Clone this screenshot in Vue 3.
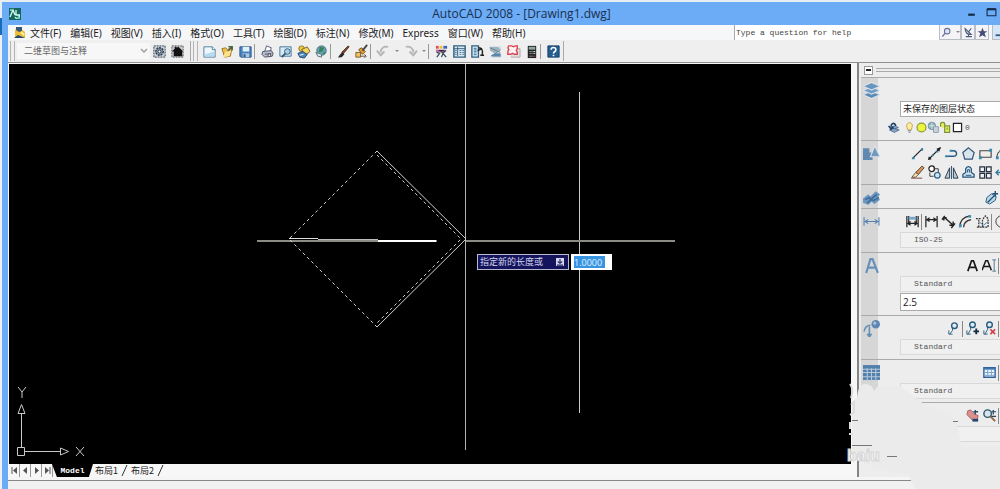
<script setup>
const menus = ['文件(F)', '编辑(E)', '视图(V)', '插入(I)', '格式(O)', '工具(T)', '绘图(D)', '标注(N)', '修改(M)', 'Express', '窗口(W)', '帮助(H)']

const icons = {
  gear: '<rect x="2" y="2" width="12" height="12" fill="#c9d3de" stroke="#333c48" stroke-dasharray="2 1"/><circle cx="8" cy="8" r="4" fill="#8295a8" stroke="#26323f" stroke-width="1.4" stroke-dasharray="2 1"/><circle cx="8" cy="8" r="1.6" fill="#fff" stroke="#26323f"/>',
  home: '<rect x="2" y="2" width="12" height="12" fill="#c5cbd2" stroke="#555" stroke-dasharray="2 1"/><path d="M2 8L5 5V3h2v1l2-1 5 5h-1v5H4V8z" fill="#111"/>',
  file: '<path d="M2 3h9l3 3v8H2z" fill="#eef7fd" stroke="#4f7e9e"/><path d="M3 11l10-3v5H3z" fill="#b4dcf0"/><path d="M11 3v3h3" fill="#fff" stroke="#4f7e9e"/>',
  open: '<path d="M2 5l4-1 2 2 5-3-2 10-6 1z" fill="#efc04c" stroke="#927026"/><path d="M7 9l6-6M9 3h4v4" fill="none" stroke="#4a6440" stroke-width="1.5"/><path d="M3 14l3-6 6-1-2 6z" fill="#ffe28b"/>',
  save: '<path d="M2 3h12v11H3l-1-1z" fill="#4b83c0" stroke="#285788"/><path d="M5 3h7v5H5z" fill="#e3f0fb"/><path d="M5 10h7v4H5z" fill="#a9c6e2"/><path d="M6 11h2v3H6z" fill="#27517d"/>',
  print: '<path d="M5 8l2-6 5 2-1 4" fill="#fff" stroke="#525e78"/><path d="M3 8l9-1 2 3-1 3-8 1-3-3z" fill="#b8bfd0" stroke="#454f6c"/><path d="M5 11l7-1" stroke="#555"/><circle cx="10" cy="12" r="1.5" fill="#e7e9f0" stroke="#444"/>',
  preview: '<path d="M2 3h12v10H2z" fill="#d5ebf7" stroke="#417495"/><circle cx="10" cy="8" r="3" fill="#a9d2e8" stroke="#355b78"/><path d="M8 10l-4 4" stroke="#355b78" stroke-width="2"/>',
  publish: '<circle cx="6" cy="5" r="3" fill="#f0c63c" stroke="#8d7223"/><path d="M6 6l6-3 3 5-5 4z" fill="#f3d65d" stroke="#716035"/><path d="M2 10l5-2 5 3-3 4-5-1z" fill="#4a86bc" stroke="#25486a"/><path d="M4 12l4-1" stroke="#fff"/>',
  globe: '<circle cx="8" cy="7" r="5" fill="#69a6bd" stroke="#446a75"/><path d="M6 3l5 1-2 4-4 1zM10 8l3 1-3 3z" fill="#39825b"/><path d="M2 9l6 2v3l-4-1z" fill="#d7e8ed" stroke="#55717a"/>',
  brush: '<path d="M13 2l1 1-6 7-2-1z" fill="#7b4b2d" stroke="#53301b"/><path d="M7 9l2 2-3 3-4 .5 3-4z" fill="#252525"/>',
  match: '<path d="M2 9h5v5H2z" fill="#f2c35d" stroke="#7e5c2c"/><path d="M5 6l3-2 4 4-3 3z" fill="#e6a02e" stroke="#6b4e26"/><path d="M14 1L9 7" stroke="#4e4440" stroke-width="2"/><path d="M7 13h5M11 11l2 2-2 2" stroke="#5c4b46" fill="none"/>',
  undo: '<path d="M13 3C8 2 5 5 5 9M1 7l4 5 4-4" fill="none" stroke="#b5b5b5" stroke-width="2"/>',
  redo: '<path d="M3 3c5-1 8 2 8 6M7 8l4 4 4-5" fill="none" stroke="#b5b5b5" stroke-width="2"/>',
  props: '<path d="M2 2h3v3H2z" fill="#e54b56"/><path d="M6 2h3v3H6z" fill="#ecc52e"/><path d="M10 2h4v3h-4z" fill="#3b62bd"/><path d="M2 6h10v3H2z" fill="#c16cab"/><path d="M3 9l3 1-3 4M7 7l6 7M8 14l2-5 3-2" fill="none" stroke="#334858" stroke-width="1.3"/><path d="M5 7h6" stroke="#222"/>',
  dcenter: '<path d="M2 2h12v12H2z" fill="#dcecf5" stroke="#315c7d" stroke-width="1.5"/><path d="M6 3v10M2 5h12" stroke="#315c7d"/><path d="M8 7h2M11 7h2M8 9h2M11 9h2M8 11h2M11 11h2M3 7h2M3 9h2M3 11h2" stroke="#47759a"/>',
  tools: '<path d="M2 2h7v12H2z" fill="#dcecf5" stroke="#315c7d" stroke-width="1.4"/><path d="M4 4h3v2H4zM4 7h3v2H4zM4 10h3v2H4z" fill="#5788ae"/><path d="M9 4c4 0 5 3 4 8M8 7l5-2M11 12h4" fill="none" stroke="#222" stroke-width="1.5"/>',
  sheet: '<path d="M2 3h12v3L8 9l6 1v4H4l3-4-5-3z" fill="#9db4bf"/><path d="M2 4l11 5M3 13l10-6" stroke="#617f90"/><path d="M5 11l8-1v3H4z" fill="#5688ad"/><path d="M10 3l4-1v4z" fill="#ddd"/>',
  markup: '<path d="M6 5h9v9H5" fill="#ddd" stroke="#b6a4a5"/><path d="M3 2h3l2 1 2-1h2v3l-1 2 1 2v2H9l-2-1-2 1H2V8l1-2-1-2z" fill="#fff2f2" stroke="#d94452" stroke-width="1.5"/>',
  calc: '<path d="M4 2h9v13H4z" fill="#242424"/><path d="M5 3h7v3H5z" fill="#91a79b"/><path d="M6 8h1M8 8h1M10 8h2M6 10h1M8 10h1M10 10h2M6 13h1M8 13h1" stroke="#ddd"/><path d="M10 13h2" stroke="#e33"/>',
  help: '<path d="M2 2h12v12H2z" fill="#255f91" stroke="#123e69"/><path d="M5.5 6C5.5 3 10.5 3 10.5 6S8 7.500 8 10M8 11.500v1.500" fill="none" stroke="#fff" stroke-width="1.7"/>',
  layers: '<path d="M0 12l8-3.500 8 3.500-8 3.500z" fill="#5b88b5" stroke="#e1e5ea"/><path d="M0 8l8-3.500L16 8l-8 3.500z" fill="#6f9cc6" stroke="#e1e5ea"/><path d="M0 4l8-3.500L16 4 8 7.500z" fill="#6795c0" stroke="#e1e5ea"/>',
  layerback: '<path d="M3 11l6-2 6 2-6 3zM4 8l5-2 5 2-5 2z" fill="#8eacc8" stroke="#446385"/><path d="M11 6C9 1 5 3 5 7M2 6l3 4 3-3" fill="none" stroke="#1e4267" stroke-width="2"/>',
  bulb: '<path d="M8 2a4 4 0 0 0-3 6l1 3h4l1-3a4 4 0 0 0-3-6z" fill="#ffed9a" stroke="#b9994a"/><path d="M6 12h4M7 14h2" stroke="#657185"/>',
  sun: '<circle cx="8" cy="8" r="5.500" fill="#eef33d" stroke="#8c9b3e" stroke-width="1.5"/>',
  freeze: '<circle cx="6" cy="6" r="4.500" fill="#94b6bb" stroke="#557d92"/><path d="M8 7h6v7H8z" fill="#cbd2db" stroke="#8393a6"/><path d="M2 6h8M6 2v8" stroke="#d9ede9"/>',
  lock: '<path d="M2 7V4c0-3 5-3 5 0v5M7 6h6v8H7z" fill="#e8ed65" stroke="#7b9436" stroke-width="1.5"/><path d="M10 8v3" stroke="#5f792c"/>',
  square: '<path d="M3 3h10v10H3z" fill="#fff" stroke="#222" stroke-width="1.5"/>',
  shapes: '<path d="M0 3h6v4h3v7H0z" fill="#6289b0"/><path d="M11 1l5 10H7z" fill="#7199c0" stroke="#dce2e8"/>',
  solid: '<path d="M0 9l5-4 2 2 5-5 4 3-2 3 2 2-5 4-3-2-3 3-5-2z" fill="#6e97bf"/><path d="M2 10l4-2 1 2 6-5M4 13l4-3 2 1 5-3" fill="none" stroke="#3e6d9b" stroke-width="1.5"/>',
  line: '<path d="M3 13L13 3" stroke="#222" stroke-width="1.3"/><path d="M2 12h3v2H2zM12 2h2v3h-2z" fill="#368bad"/>',
  ray: '<path d="M2 14L14 2" stroke="#222" stroke-width="1.5"/><path d="M10 3l5-2-2 5zM2 11l-1 4 4-1z" fill="#222"/><path d="M5 9h2v2H5zM10 5h2v2h-2z" fill="#368bad"/>',
  pline: '<path d="M2 11h8c5 0 4-6 0-6H7" fill="none" stroke="#275b83" stroke-width="1.5"/><path d="M1 10h3v2H1zM6 4h3v2H6z" fill="#368bad"/>',
  poly: '<path d="M8 2l6 5-2 7H4L2 7z" fill="#dae4ed" stroke="#315379" stroke-width="1.3"/>',
  rect: '<path d="M2 5h12v7H2z" fill="none" stroke="#444" stroke-width="1.2"/><path d="M1 11h3v3H1zM12 3h3v3h-3z" fill="#368bad"/>',
  arc: '<path d="M2 13C2 5 7 3 13 3" fill="none" stroke="#222"/><path d="M1 11h3v3H1zM5 5h3v3H5z" fill="#368bad"/>',
  erase: '<path d="M13 1l2 2-6 7-3-2z" fill="#d8945c" stroke="#55402f"/><path d="M6 8l3 2-3 3H2z" fill="#ffe4a0" stroke="#555"/><path d="M1 14h12" stroke="#7b3c34"/>',
  copy: '<circle cx="5" cy="4" r="3" fill="#fff" stroke="#222" stroke-width="1.3"/><circle cx="11" cy="11" r="3" fill="#d0e4f1" stroke="#265d85" stroke-width="1.3"/><path d="M7 4h5v4M3 8v4h4" fill="none" stroke="#333"/>',
  mirror: '<path d="M6 3v11H1zM10 3v11h5z" fill="#b6cbdb" stroke="#2d3848"/><path d="M8 1v14" stroke="#285277"/>',
  offset: '<path d="M2 13h12v-3l-3-2V4C10 1 6 1 5 4v4l-3 2z" fill="#cfe5f1" stroke="#255379" stroke-width="1.3"/><path d="M5 11h6M7 8V5h2v3" fill="none" stroke="#255379"/>',
  array: '<path d="M2 2h5v5H2zM9 2h5v5H9zM2 9h5v5H2zM9 9h5v5H9z" fill="#eff3f6" stroke="#252f3d" stroke-width="1.3"/>',
  move: '<path d="M1 8h14M8 1v14M4 5L1 8l3 3" fill="none" stroke="#397ca3" stroke-width="1.5"/>',
  tool3d: '<path d="M3 8l5-4 5 3-1 4-6 4-4-2z" fill="#bdd7e6" stroke="#286083"/><path d="M4 13l7-7M12 1v6M9 4h6" fill="none" stroke="#1b4f77" stroke-width="1.5"/>',
  dimBig: '<path d="M1 4v8M15 4v8M2 8h12M5 6L2 8l3 2M11 6l3 2-3 2" fill="none" stroke="#5582ae"/>',
  dimension: '<path d="M2 2v12M14 2v12M3 6h10M6 4L3 6l3 2M10 4l3 2-3 2" fill="none" stroke="#222" stroke-width="1.3"/>',
  dimBlue: '<path d="M2 2v12M14 2v12M4 2v8M12 2v8" fill="none" stroke="#222" stroke-width="1.3"/><path d="M4 3h8v3H4z" fill="#76a8cd"/><path d="M3 10h10M6 8l-3 2 3 2M10 8l3 2-3 2" fill="none" stroke="#222" stroke-width="1.3"/>',
  aligned: '<path d="M4 2L1 6M15 10l-4 5M4 4l9 8M3 7V4h3M9 12h4V8" fill="none" stroke="#222" stroke-width="1.5"/>',
  arcdim: '<path d="M2 14C2 6 6 3 13 2M6 14c0-5 3-7 8-8" fill="none" stroke="#333" stroke-width="1.4"/><path d="M1 11h3v3H1zM11 1h3v3h-3z" fill="#4492b3"/>',
  ordinate: '<path d="M2 14h12M4 14V6M8 14V6l3-4 3 3v9M1 5h6" fill="none" stroke="#333" stroke-width="1.3" stroke-dasharray="2 1"/><path d="M4 8l5 4 5-4" fill="none" stroke="#497b9d"/>',
  radius: '<circle cx="8" cy="8" r="6" fill="none" stroke="#333"/><path d="M8 8l5-4" stroke="#222" stroke-width="2"/>',
  textA: '<path d="M3 14L7 3h2l4 11M5 10h6" fill="none" stroke="#181818" stroke-width="1.8"/>',
  textAi: '<path d="M0 13L4 3h2l4 10M2 9h6" fill="none" stroke="#181818" stroke-width="1.6"/><path d="M11 2h4M13 2v12M11 14h4" stroke="#53748e"/>',
  textBig: '<path d="M3 15L7 2h2l5 13M5 10h7" fill="none" stroke="#668fb9" stroke-width="2"/>',
  leadBig: '<circle cx="12" cy="4" r="4" fill="#6088b6"/><circle cx="11" cy="3" r="1.500" fill="#a9c2da"/><path d="M1 11Q2 5 7 5M6 6v10M4 13l2 3 2-3" fill="none" stroke="#668fb5" stroke-width="1.5"/>',
  lead: '<circle cx="9" cy="5" r="3" fill="#e0edf5" stroke="#285c81" stroke-width="1.5"/><path d="M7 7v3l-3 4M3 10v4h4" fill="none" stroke="#285c81"/>',
  leadAdd: '<circle cx="8" cy="4" r="3" fill="#e0edf5" stroke="#285c81" stroke-width="1.5"/><path d="M6 6v3l-3 5M2 10v4h4" fill="none" stroke="#285c81"/><path d="M9 11h6M12 8v6" stroke="#172a47" stroke-width="2"/>',
  leadDel: '<circle cx="8" cy="4" r="3" fill="#e0edf5" stroke="#285c81" stroke-width="1.5"/><path d="M6 6v3l-3 5M2 10v4h4" fill="none" stroke="#285c81"/><path d="M9 9l5 5M14 9l-5 5" stroke="#ce414a" stroke-width="1.7"/>',
  tableBig: '<path d="M0 1h16v14H0z" fill="#537fad"/><path d="M0 5h16M0 8h16M0 12h16M4 4v12M8 4v12M12 4v12" stroke="#b7cadc"/>',
  table: '<path d="M2 3h12v10H2z" fill="#edf5fb" stroke="#315f97" stroke-width="1.500"/><path d="M2 4h12" stroke="#3f76b6" stroke-width="2"/><path d="M2 8h12M2 11h12M6 5v8M10 5v8" stroke="#79a1ca"/>',
  pan: '<path d="M3 3l3-1 5 5 3 1-1 5H8L2 7z" fill="#d98f8b" stroke="#a76261"/><path d="M8 13h6" stroke="#24476c" stroke-width="3"/><path d="M11 2v5M9 4h5" stroke="#264f70" stroke-width="1.5"/>',
  zoomIcon: '<circle cx="6" cy="6" r="4" fill="#d5e6ef" stroke="#31546c" stroke-width="1.500"/><path d="M9 9l5 5" stroke="#936443" stroke-width="2"/><path d="M10 4h5M12 2v5M10 9h5" stroke="#29485f" stroke-width="1.300"/>',
  find: '<circle cx="9" cy="6" r="4" fill="#e0e3f4" stroke="#68719c" stroke-width="1.500"/><path d="M6 9l-4 5" stroke="#68719c" stroke-width="2"/>',
  satellite: '<path d="M3 2c0 7 3 9 9 9zM8 7l4-5M4 14h9M8 11v3" fill="#b9c3d3" stroke="#4d5a7a" stroke-width="1.500"/>',
  star: '<path d="M8 1l2 5h5l-4 3 2 6-5-3-5 3 2-6-4-3h5z" fill="#444b78"/>'
}

const toolbar = [
  ['新建', 'file'], ['打开', 'open'], ['保存', 'save'], null,
  ['打印', 'print'], ['打印预览', 'preview'], ['发布', 'publish'], ['三维 DWF', 'globe'], null,
  ['特性刷', 'brush'], ['块编辑器', 'match'], null,
  ['放弃', 'undo', true], ['重做', 'redo', true], null,
  ['特性', 'props'], ['设计中心', 'dcenter'], ['工具选项板', 'tools'], ['图纸集', 'sheet'], ['标记集', 'markup'], ['计算器', 'calc'], null,
  ['帮助', 'help']
]

const sections = [
  { kind: 'layer', icon: 'layers', rows: [{ blank: true }, { field: '未保存的图层状态', name: '图层状态', on: true, cjk: true }, { icons: ['layerback', 'bulb', 'sun', 'freeze', 'lock', 'square'], label: '0', layer: true }] },
  { kind: 'draw', icon: 'shapes', rows: [{ icons: ['line', 'ray', 'pline', 'poly', 'rect', 'arc'], indent: true }, { icons: ['erase', 'copy', 'mirror', 'offset', 'array', 'move'], indent: true }] },
  { kind: 'solid', icon: 'solid', rows: [{ icons: ['tool3d'], end: true }] },
  { kind: 'dim', icon: 'dimBig', rows: [{ icons: ['dimBlue', '|', 'dimension', 'aligned', 'arcdim', 'ordinate', '|', 'radius'], dim: true }, { field: 'ISO-25', name: '标注样式' }] },
  { kind: 'text', icon: 'textBig', rows: [{ icons: ['textA', 'textAi', '|'], end: true }, { field: 'Standard', name: '文字样式' }, { field: '2.5', name: '文字高度', on: true }] },
  { kind: 'lead', icon: 'leadBig', rows: [{ icons: ['lead', '|', 'leadAdd', 'leadDel', '|'], end: true }, { field: 'Standard', name: '多重引线样式' }] },
  { kind: 'table', icon: 'tableBig', rows: [{ icons: ['table', '|'], end: true }, { field: 'Standard', name: '表格样式' }] },
  { kind: 'nav', icon: '', rows: [{ icons: ['pan', 'zoomIcon', '|'], end: true }, { field: '', name: '视图' }] }
]
</script>

<template>
  <div class="window">
    <div class="edge"></div>
    <div class="frame">
      <header class="titlebar">
        <svg class="logo" viewBox="0 0 12 12" aria-hidden="true"><path d="M0 0h12v12H0z" fill="#16655f"/><path d="M1 9L4 2l2 5M7 2v5h4M6 9a2 2 0 1 0 4-2" fill="none" stroke="#d4fff0" stroke-width="1.3"/><path d="M1 1h2v2H1zM8 9h3v2H8z" fill="#73c9ad"/></svg>
        <h1>AutoCAD 2008 - [Drawing1.dwg]</h1>
        <div class="winbtns">
          <button aria-label="最小化"><svg viewBox="0 0 10 10"><path d="M2 7h6" stroke="#152b4a" stroke-width="2"/></svg></button>
          <button aria-label="最大化"><svg viewBox="0 0 10 10"><path d="M1 2h8v6H1z" fill="none" stroke="#152b4a"/><path d="M1 2h8" stroke="#152b4a" stroke-width="2"/></svg></button>
        </div>
      </header>

      <div class="menubar">
        <svg class="docicon" viewBox="0 0 12 12" aria-hidden="true"><path d="M1 3l3-2 3 1 4 3v6H1z" fill="#edbd32"/><path d="M2 0h6v4l-3 1-3-2z" fill="#3a5771"/><path d="M0 11l4-3 7 3z" fill="#244b70"/><path d="M7 5l3 3" stroke="#fff2a0" stroke-width="2"/></svg>
        <nav><button v-for="m in menus" :key="m">{{ m }}</button></nav>
        <div class="search">
          <input class="ask" aria-label="Help search" value="Type a question for help">
          <button class="find" aria-label="搜索"><svg viewBox="0 0 16 16" v-html="icons.find"></svg><i></i></button>
          <button aria-label="通讯中心"><svg viewBox="0 0 16 16" v-html="icons.satellite"></svg></button>
          <button aria-label="收藏夹"><svg viewBox="0 0 16 16" v-html="icons.star"></svg></button>
          <button class="mdi" aria-label="最小化图形"><svg viewBox="0 0 8 12"><path d="M3 9h5" stroke="#385b83" stroke-width="2"/></svg></button>
        </div>
      </div>

      <div class="toolbar">
        <span class="grip"></span>
        <label class="workspace"><select aria-label="工作空间"><option>二维草图与注释</option></select><svg viewBox="0 0 8 6"><path d="M1 1l3 3 3-3" fill="none" stroke="#999" stroke-width="1.3"/></svg></label>
        <button class="tool" aria-label="工作空间设置"><svg viewBox="0 0 16 16" v-html="icons.gear"></svg></button>
        <button class="tool" aria-label="我的工作空间"><svg viewBox="0 0 16 16" v-html="icons.home"></svg></button>
        <span class="barend"></span><span class="grip"></span>
        <template v-for="(t, i) in toolbar" :key="i">
          <span v-if="!t" class="sep"></span>
          <template v-else>
            <button class="tool" :aria-label="t[0]"><svg viewBox="0 0 16 16" v-html="icons[t[1]]"></svg></button>
            <span v-if="t[2]" class="drop"><i></i></span>
          </template>
        </template>
        <span class="barend last"></span>
      </div>

      <div class="work">
        <main>
          <div class="canvas">
            <svg class="drawing" viewBox="9 64 842 400" shape-rendering="crispEdges">
              <path d="M465.500 64V450" stroke="#b5b4b0" stroke-width="1"/>
              <path d="M579.500 92V413" stroke="#c9c9c9"/>
              <path d="M257 240.500H437M466 240.500H675" stroke="#8d8b86" stroke-width="2"/>
              <path d="M378 240.500H436" stroke="#fff" stroke-width="2"/>
              <path d="M289 238.500H318" stroke="#ddd"/>
              <path d="M318 239.500H378" stroke="#bbb"/>
              <g fill="none" shape-rendering="auto">
                <path d="M377 151L466 239L377 327" stroke="#cecece"/>
                <path d="M377 151L289 239L377 327M377 155L461 239L377 323" stroke="#d0d0d0" stroke-dasharray="3 3"/>
              </g>
            </svg>
            <svg class="ucs" viewBox="9 384 84 80" fill="none" stroke="#c9c9c9">
              <path d="M17.500 447.500h7v8h-7zM21.500 448V413M25 451.500h35M18 413.500l3.500-9 3.500 9zM60.500 448l8 3.500-8 3.500zM18 387l4 5 4-5M22 392v6M76 447l8 9M84 447l-8 9"/>
            </svg>
            <div class="prompt">
              <label for="length">指定新的长度或<svg viewBox="0 0 9 9"><path d="M0 0h9v9H0z" fill="#d7d7f0"/><path d="M4.500 1v5M2 4l2.500 2L7 4M1 8h7" fill="none" stroke="#242466" stroke-width="1.300"/></svg></label>
              <input id="length" value="1.0000">
            </div>
          </div>
          <div class="tabs">
            <div class="pager">
              <button aria-label="第一个"><svg viewBox="0 0 9 9"><path d="M2 1v7" stroke="#555"/><path d="M7 1v7L3 4.500z" fill="#555"/></svg></button>
              <button aria-label="上一个"><svg viewBox="0 0 9 9"><path d="M6 1v7L2 4.500z" fill="#555"/></svg></button>
              <button aria-label="下一个"><svg viewBox="0 0 9 9"><path d="M3 1v7l4-3.500z" fill="#555"/></svg></button>
              <button aria-label="最后一个"><svg viewBox="0 0 9 9"><path d="M2 1v7l4-3.500z" fill="#555"/><path d="M7 1v7" stroke="#555"/></svg></button>
            </div>
            <button class="model">Model</button>
            <button class="layout">布局1</button><svg class="slash" viewBox="0 0 8 12"><path d="M1 12L6 1" stroke="#333"/></svg>
            <button class="layout">布局2</button><svg class="slash" viewBox="0 0 8 12"><path d="M1 12L6 1" stroke="#333"/></svg>
          </div>
        </main>

        <aside>
          <div class="panelhead"><button aria-label="折叠"><i></i></button><span></span></div>
          <section v-for="s in sections" :key="s.kind" :class="s.kind">
            <div class="side"><svg v-if="s.icon" viewBox="0 0 16 16" v-html="icons[s.icon]"></svg></div>
            <div class="body">
              <template v-for="(r, i) in s.rows" :key="i">
                <select v-if="r.field !== undefined" class="field" :class="{ on: r.on, cjk: r.cjk }" :aria-label="r.name"><option>{{ r.field }}</option></select>
                <div v-else class="row" :class="{ end: r.end, indent: r.indent, dims: r.dim, small: r.layer }">
                  <template v-for="(n, j) in r.icons" :key="j">
                    <span v-if="n === '|'" class="bar"></span>
                    <button v-else :aria-label="n"><svg viewBox="0 0 16 16" v-html="icons[n]"></svg></button>
                  </template>
                  <span v-if="r.label" class="lname">{{ r.label }}</span>
                </div>
              </template>
            </div>
          </section>
        </aside>
      </div>
      <footer></footer>
    </div>

    <svg class="mark" viewBox="840 379 160 110" aria-hidden="true">
      <path d="M852 420v-14q1-6 5-8q1-14 8-14q7 0 9 7l4-5h22l5 4q6 4 10 8q6 3 10 7l26 10q5 4 6 12q3 7 4 17l5 3h40v43h-90l-8-15-25-4-31-13z" fill="#ebebeb"/>
      <path d="M850 384q4 5 1 14M851 405l3-3v10l-4 3M850 422v7M849 434h4" fill="none" stroke="#ddd" stroke-width="2"/>
      <path d="M852 420.500h6M852 445.500h20M887 456.500h10M953 421.500h5" stroke="#777"/>
      <text x="847" y="461">baiu</text>
    </svg>
  </div>
</template>

<style>
body { margin: 0; }
</style>

<style scoped>
* { box-sizing: border-box; }
.window { position: relative; display: flex; height: 100vh; overflow: hidden; background: #6cabf5; border-top: 2px solid #e7eff5; font: 10px/14px "Noto Sans", "Noto Sans CJK SC", sans-serif; color: #222; }
button { border: 0; padding: 0; margin: 0; background: none; font: inherit; color: inherit; }
svg { display: block; }
.edge { flex: none; width: 2px; background: linear-gradient(#e5eef5 16px, #176bb8 16px, #176bb8 33px, #eef1f3 33px); }
.frame { flex: 1; min-width: 0; display: flex; flex-direction: column; padding-left: 6px; }
.titlebar { display: flex; align-items: center; height: 23px; flex: none; }
.logo { width: 12px; height: 12px; margin-left: 1px; }
h1 { flex: 1; margin: 0; padding-left: 48px; text-align: center; font: 12px/22px "Open Sans", "Noto Sans", sans-serif; color: #18304f; }
.winbtns { display: flex; gap: 9px; padding-bottom: 3px; width: 34px; margin-left: -8px; }
.winbtns svg { width: 11px; height: 11px; }
.menubar { display: flex; align-items: center; height: 15px; flex: none; padding-left: 6px; background: #f6f7f9; }
.docicon { width: 12px; height: 12px; margin-right: 4px; }
nav { display: flex; gap: 9px; flex: 1; white-space: nowrap; }
.search { display: flex; align-items: stretch; height: 15px; }
.ask { width: 205px; border: 0; border-left: 1px solid #aaa; padding: 0 1px; background: #fff; font: 8px/14px "Liberation Mono", monospace; color: #444; }
.search button { display: flex; align-items: center; justify-content: center; width: 14px; border: 1px solid #b9bdc6; border-top: 0; background: #f4f4f6; }
.search svg { width: 11px; height: 11px; flex: none; }
.search .find { width: 22px; gap: 4px; }
.search .mdi { width: 8px; margin-left: 3px; background: #d4e7f8; border-right: 0; }
i { display: block; }
.find i, .drop i { width: 4px; border: 2px solid transparent; border-top-color: #888; border-bottom: 0; }
.toolbar { display: flex; align-items: center; height: 22px; flex: none; background: #efefef; }
.grip { width: 5px; height: 20px; margin: 0 2px; border: solid #b4b4b4; border-width: 0 1px; }
.workspace { display: flex; align-items: center; width: 133px; height: 16px; background: #f7f7f7; }
.workspace select { flex: 1; appearance: none; border: 0; padding: 0 7px; background: none; font: 9px/14px "Noto Sans CJK SC", sans-serif; color: #666; }
.workspace svg { width: 8px; height: 6px; margin: 0 2px; }
.tool { flex: none; width: 18px; height: 18px; display: grid; place-items: center; }
.tool svg { width: 15px; height: 15px; }
.barend { width: 5px; height: 20px; border-right: 1px solid #aaa; }
.barend.last { width: 2px; }
.sep { width: 4px; height: 15px; border-left: 1px solid #999; }
.drop { width: 9px; padding-left: 3px; }
.work { flex: 1; min-height: 0; display: flex; background: #f7f7f7; border-top: 1px solid #8e8e8e; overflow: hidden; }
main { flex: 1; min-width: 0; display: flex; flex-direction: column; }
.canvas { position: relative; flex: 1; min-height: 0; margin: 1px 6px 0 1px; background: #000; overflow: hidden; }
.drawing { position: absolute; left: 0; top: 0; width: 842px; height: 400px; }
.ucs { position: absolute; left: 0; bottom: 0; width: 84px; height: 80px; }
.prompt { position: absolute; left: 468px; top: 190px; display: flex; gap: 2px; }
.prompt label { display: flex; align-items: center; gap: 13px; height: 16px; width: 92px; padding: 0 2px; border: 1px solid #b8b8d2; background: #14145c; color: #d5d5ef; font: 9px/14px "Noto Sans CJK SC", sans-serif; white-space: nowrap; }
.prompt label svg { width: 8px; height: 8px; flex: none; }
.prompt input { width: 41px; height: 16px; border: 0; padding: 0 3px; background: linear-gradient(#3694e3, #3694e3) 3px 2px / 31px 12px no-repeat #fff; color: #e5f4ff; font: 9px/14px "Open Sans", sans-serif; }
.tabs { display: flex; height: 13px; flex: none; padding-left: 1px; }
.pager { display: flex; padding-right: 1px; }
.pager button { width: 11px; border-right: 1px solid #999; display: grid; place-items: center; }
.pager svg { width: 9px; height: 9px; }
.model { width: 41px; margin-left: -2px; background: #000; color: #fff; clip-path: polygon(0 0, 100% 0, 90% 100%, 12% 100%); font: bold 8px/12px "Liberation Mono", monospace; }
.layout { margin-left: 2px; font: 9px/12px "Noto Sans CJK SC", sans-serif; }
.slash { width: 8px; height: 12px; margin-left: 3px; }
aside { flex: none; width: 143px; border-left: 2px solid #858585; overflow: hidden; background: #ededed; }
.panelhead { display: flex; align-items: center; height: 14px; padding-left: 5px; gap: 3px; }
.panelhead button { width: 9px; height: 9px; border: 1px solid #999; background: #fff; display: grid; place-items: center; }
.panelhead i { width: 5px; height: 2px; background: #222; }
.panelhead span { flex: 1; height: 4px; border: solid #aaa; border-width: 1px 0; }
section { display: flex; margin-left: 2px; border-top: 1px solid #aaa; }
.side { width: 17px; flex: none; background: #d6d6d6; padding: 4px 0 0 2px; }
.side svg { width: 17px; height: 17px; }
.body { flex: 1; min-width: 0; display: flex; flex-direction: column; gap: 1px; padding: 3px 0 4px; }
.layer .body { padding-bottom: 3px; }
.draw .body { gap: 0; padding-bottom: 2px; }
.solid .body { padding-bottom: 1px; }
.table .body { padding-bottom: 3px; }
.row { height: 19px; display: flex; align-items: center; }
.row button { width: 17px; flex: none; }
.row svg { width: 15px; height: 15px; margin: 0 auto; }
.row.end { justify-content: flex-end; }
.row.indent { margin-left: 31px; }
.row.dims { margin-left: 26px; }
.row.small { margin-left: 5px; }
.small button { width: 12px; }
.small svg { width: 13px; height: 13px; }
.small button:first-child { width: 20px; }
.lname { font: 8px/12px "Liberation Mono", monospace; color: #555; margin-left: 2px; }
.bar { width: 2px; height: 16px; border-left: 1px solid #888; flex: none; }
.field { appearance: none; display: block; height: 16px; margin: 0 0 0 22px; padding: 0 0 0 13px; border: 1px solid #d9d9d9; border-right: 0; border-radius: 0; background: #f0f0f0; font: 8px/14px "Liberation Mono", monospace; color: #555; }
.field.on { padding-left: 2px; background: #fff; border-color: #aaa; color: #222; font: 10px/16px "Open Sans", sans-serif; height: 18px; }
.field.cjk { height: 16px; font: 9px/14px "Noto Sans CJK SC", sans-serif; }
footer { flex: none; height: 12px; background: linear-gradient(#f5f5f5 3px, #888 3px, #888 4px, #f1f1f1 4px); }
.mark { position: absolute; right: 0; bottom: 0; width: 160px; height: 110px; pointer-events: none; }
.mark text { font: bold 16px "Liberation Sans", sans-serif; fill: #f7f7f7; stroke: #d5d5d5; }
</style>
